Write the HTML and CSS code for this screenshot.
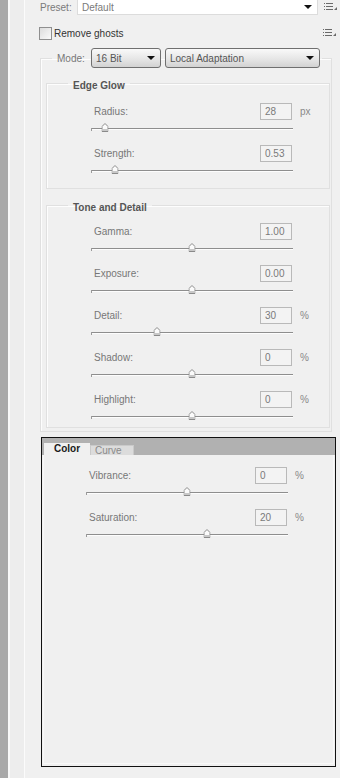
FILE: index.html
```html
<!DOCTYPE html>
<html>
<head>
<meta charset="utf-8">
<title>HDR Toning</title>
<link rel="stylesheet" href="styles.css">
</head>
<body>
<div class="app">
  <div class="rail"></div>
  <div class="gutter"></div>
  <main class="main">
    <div class="preset-row">
      <span class="preset-label">Preset:</span>
      <div class="preset-box"><span class="preset-value">Default</span><span class="preset-btn"><span class="arrow"></span></span></div>
      <svg class="menu-icon" width="14" height="8" viewBox="0 0 14 8"><g fill="#6a6a6a"><rect x="0" y="0" width="1" height="1"/><rect x="0" y="3" width="1" height="1"/><rect x="0" y="6" width="1" height="1"/><rect x="2" y="0" width="7" height="1"/><rect x="2" y="3" width="7" height="1"/><rect x="2" y="6" width="7" height="1"/><path d="M13 4 V7 H10 Z"/></g></svg>
    </div>
    <div class="ghost-row">
      <span class="checkbox"></span>
      <span class="ghost-label">Remove ghosts</span>
      <svg class="menu-icon" width="14" height="8" viewBox="0 0 14 8"><g fill="#6a6a6a"><rect x="0" y="0" width="1" height="1"/><rect x="0" y="3" width="1" height="1"/><rect x="0" y="6" width="1" height="1"/><rect x="2" y="0" width="7" height="1"/><rect x="2" y="3" width="7" height="1"/><rect x="2" y="6" width="7" height="1"/><path d="M13 4 V7 H10 Z"/></g></svg>
    </div>

    <fieldset class="group outer">
      <legend class="mode-legend">
        <span class="mode-label">Mode:</span>
        <span class="select bit"><span class="select-text">16 Bit</span><span class="arrow"></span></span>
        <span class="select method"><span class="select-text">Local Adaptation</span><span class="arrow"></span></span>
      </legend>

      <fieldset class="group sub edge">
        <legend class="sub-title">Edge Glow</legend>
        <div class="rows">
          <div class="row">
            <div class="head"><span class="label">Radius:</span><span class="field">28</span><span class="unit">px</span></div>
            <div class="slider"><span class="track"></span><span class="thumb" style="left:7%"><svg width="7" height="9" viewBox="0 0 7 9"><path d="M3.5 0.5 L6.5 3.5 V8.5 H0.5 V3.5 Z" fill="#fbfbfb" stroke="#8a8a8a"/><rect x="1" y="6" width="5" height="2" fill="#c8c8c8"/></svg></span></div>
          </div>
          <div class="row">
            <div class="head"><span class="label">Strength:</span><span class="field">0.53</span><span class="unit"></span></div>
            <div class="slider"><span class="track"></span><span class="thumb" style="left:12%"><svg width="7" height="9" viewBox="0 0 7 9"><path d="M3.5 0.5 L6.5 3.5 V8.5 H0.5 V3.5 Z" fill="#fbfbfb" stroke="#8a8a8a"/><rect x="1" y="6" width="5" height="2" fill="#c8c8c8"/></svg></span></div>
          </div>
        </div>
      </fieldset>

      <fieldset class="group sub tone">
        <legend class="sub-title">Tone and Detail</legend>
        <div class="rows">
          <div class="row">
            <div class="head"><span class="label">Gamma:</span><span class="field">1.00</span><span class="unit"></span></div>
            <div class="slider"><span class="track"></span><span class="thumb" style="left:50%"><svg width="7" height="9" viewBox="0 0 7 9"><path d="M3.5 0.5 L6.5 3.5 V8.5 H0.5 V3.5 Z" fill="#fbfbfb" stroke="#8a8a8a"/><rect x="1" y="6" width="5" height="2" fill="#c8c8c8"/></svg></span></div>
          </div>
          <div class="row">
            <div class="head"><span class="label">Exposure:</span><span class="field">0.00</span><span class="unit"></span></div>
            <div class="slider"><span class="track"></span><span class="thumb" style="left:50%"><svg width="7" height="9" viewBox="0 0 7 9"><path d="M3.5 0.5 L6.5 3.5 V8.5 H0.5 V3.5 Z" fill="#fbfbfb" stroke="#8a8a8a"/><rect x="1" y="6" width="5" height="2" fill="#c8c8c8"/></svg></span></div>
          </div>
          <div class="row">
            <div class="head"><span class="label">Detail:</span><span class="field">30</span><span class="unit">%</span></div>
            <div class="slider"><span class="track"></span><span class="thumb" style="left:32.5%"><svg width="7" height="9" viewBox="0 0 7 9"><path d="M3.5 0.5 L6.5 3.5 V8.5 H0.5 V3.5 Z" fill="#fbfbfb" stroke="#8a8a8a"/><rect x="1" y="6" width="5" height="2" fill="#c8c8c8"/></svg></span></div>
          </div>
          <div class="row">
            <div class="head"><span class="label">Shadow:</span><span class="field">0</span><span class="unit">%</span></div>
            <div class="slider"><span class="track"></span><span class="thumb" style="left:50%"><svg width="7" height="9" viewBox="0 0 7 9"><path d="M3.5 0.5 L6.5 3.5 V8.5 H0.5 V3.5 Z" fill="#fbfbfb" stroke="#8a8a8a"/><rect x="1" y="6" width="5" height="2" fill="#c8c8c8"/></svg></span></div>
          </div>
          <div class="row">
            <div class="head"><span class="label">Highlight:</span><span class="field">0</span><span class="unit">%</span></div>
            <div class="slider"><span class="track"></span><span class="thumb" style="left:50%"><svg width="7" height="9" viewBox="0 0 7 9"><path d="M3.5 0.5 L6.5 3.5 V8.5 H0.5 V3.5 Z" fill="#fbfbfb" stroke="#8a8a8a"/><rect x="1" y="6" width="5" height="2" fill="#c8c8c8"/></svg></span></div>
          </div>
        </div>
      </fieldset>
    </fieldset>

    <section class="tabpanel">
      <div class="tabs">
        <span class="tab active">Color</span>
        <span class="tab">Curve</span>
      </div>
      <div class="tab-body">
        <div class="row">
          <div class="head"><span class="label">Vibrance:</span><span class="field">0</span><span class="unit">%</span></div>
          <div class="slider"><span class="track"></span><span class="thumb" style="left:50%"><svg width="7" height="9" viewBox="0 0 7 9"><path d="M3.5 0.5 L6.5 3.5 V8.5 H0.5 V3.5 Z" fill="#fbfbfb" stroke="#8a8a8a"/><rect x="1" y="6" width="5" height="2" fill="#c8c8c8"/></svg></span></div>
        </div>
        <div class="row">
          <div class="head"><span class="label">Saturation:</span><span class="field">20</span><span class="unit">%</span></div>
          <div class="slider"><span class="track"></span><span class="thumb" style="left:60%"><svg width="7" height="9" viewBox="0 0 7 9"><path d="M3.5 0.5 L6.5 3.5 V8.5 H0.5 V3.5 Z" fill="#fbfbfb" stroke="#8a8a8a"/><rect x="1" y="6" width="5" height="2" fill="#c8c8c8"/></svg></span></div>
        </div>
      </div>
    </section>
  </main>
</div>
</body>
</html>
```

FILE: styles.css
```css
* { box-sizing: border-box; }

html, body {
  margin: 0;
  padding: 0;
  background: #f0f0f0;
}

body {
  font-family: "Liberation Sans", Arial, sans-serif;
  font-size: 10px;
  color: #777;
  width: 340px;
  height: 778px;
  overflow: hidden;
}

.app {
  display: flex;
  height: 778px;
}

.rail {
  width: 8px;
  flex: none;
  background: #a8a8a8;
}

.gutter {
  width: 17px;
  flex: none;
  background: #ededed;
  border-left: 2px solid #f8f8f8;
  border-right: 1px solid #fbfbfb;
}

.main {
  flex: 1;
  min-width: 0;
}

/* Preset row */
.preset-row {
  display: flex;
  align-items: flex-start;
  height: 16px;
  padding-left: 15px;
}

.preset-label {
  width: 37px;
  line-height: 16px;
  color: #7a7a7a;
}

.preset-box {
  display: flex;
  width: 241px;
  height: 16px;
  margin-top: -1px;
  background: #fff;
  border: 1px solid #dcdcdc;
  border-top: none;
}

.preset-value {
  flex: 1;
  padding-left: 4px;
  line-height: 17px;
  color: #7a7a7a;
}

.preset-btn {
  width: 18px;
  display: flex;
  justify-content: center;
  align-items: center;
}

.arrow {
  width: 0;
  height: 0;
  border-left: 4px solid transparent;
  border-right: 4px solid transparent;
  border-top: 4px solid #111;
}

.menu-icon {
  display: block;
  margin-left: 6px;
  margin-top: 3px;
}

/* Ghost row */
.ghost-row {
  display: flex;
  align-items: center;
  height: 14px;
  margin-top: 10px;
  padding-left: 14px;
}

.checkbox {
  width: 13px;
  height: 13px;
  border: 1px solid #8f8f8f;
  background: linear-gradient(135deg, #dcdcdc, #fafafa);
}

.ghost-label {
  margin-left: 2px;
  color: #333;
  flex: 1;
}

.ghost-row .menu-icon {
  margin: 0 3px 0 0;
}

/* Group boxes */
.group {
  margin: 0;
  padding: 0;
  min-width: 0;
  border: 1px solid #e0e0e0;
  box-shadow: inset 1px 1px 0 #fdfdfd;
}

.outer {
  width: 292px;
  margin: 8px 0 0 15px;
  padding: 6px 2px 3px 5px;
}

.mode-legend {
  display: flex;
  align-items: center;
  margin-left: 6px;
  padding: 0 2px 0 5px;
  height: 20px;
}

.mode-label {
  width: 34px;
  color: #777;
}

.select {
  display: flex;
  align-items: center;
  height: 20px;
  border: 1px solid #6f6f6f;
  border-radius: 3px;
  background: linear-gradient(#f9f9f9, #e6e6e6 55%, #d2d2d2);
  padding: 0 5px 0 4px;
  color: #555;
}

.select-text { flex: 1; }

.bit { width: 70px; }

.method {
  width: 155px;
  margin-left: 4px;
}

.sub {
  width: 284px;
}

.sub-title {
  margin-left: 21px;
  padding: 5px 5px 0;
  line-height: 14px;
  font-weight: bold;
  color: #555;
}

.edge {
  padding: 10px 0 10px;
}

.tone {
  margin-top: 7px;
  padding: 8px 0 3px;
}

.rows {
  padding-left: 44px;
  display: flex;
  flex-direction: column;
  gap: 9px;
}

/* Slider rows */
.row {
  width: 233px;
}

.head {
  display: flex;
  align-items: center;
  height: 17px;
}

.label {
  flex: 1;
  padding-left: 3px;
  color: #777;
}

.field {
  width: 32px;
  height: 17px;
  border: 1px solid #b9b9b9;
  background: #f3f3f3;
  padding-left: 4px;
  line-height: 15px;
  color: #7a7a7a;
}

.unit {
  width: 24px;
  margin-left: 8px;
  color: #888;
}

.slider {
  position: relative;
  width: 202px;
  height: 16px;
  padding-top: 8px;
}

.track {
  display: block;
  height: 1px;
  background: #8e8e8e;
  box-shadow: 0 1px 0 #fdfdfd;
}

.track::before {
  content: "";
  display: block;
  width: 1px;
  height: 3px;
  background: #9a9a9a;
}

.thumb {
  position: absolute;
  top: 3px;
  transform: translateX(-50%);
  line-height: 0;
}

.thumb svg { display: block; }

/* Tab panel */
.tabpanel {
  width: 295px;
  height: 330px;
  margin: 5px 0 0 16px;
  border: 1px solid #111;
  display: flex;
  flex-direction: column;
}

.tabs {
  display: flex;
  align-items: flex-end;
  height: 17px;
  background: #b1b1b1;
  padding-left: 2px;
}

.tab {
  font-size: 10px;
}

.tab.active {
  width: 46px;
  height: 12px;
  line-height: 12px;
  padding-left: 10px;
  background: #f0f0f0;
  color: #1a1a1a;
  font-weight: bold;
}

.tab:not(.active) {
  width: 44px;
  height: 10px;
  line-height: 9px;
  padding-left: 4px;
  color: #8a8a8a;
  background: #dcdcdc;
  border: 1px solid #cacaca;
  border-bottom: none;
}

.tab-body {
  flex: 1;
  margin: 0 1px 2px;
  border: 1px solid #f8f8f8;
  border-top: none;
  padding: 12px 0 0 42px;
  display: flex;
  flex-direction: column;
  gap: 9px;
}
```
